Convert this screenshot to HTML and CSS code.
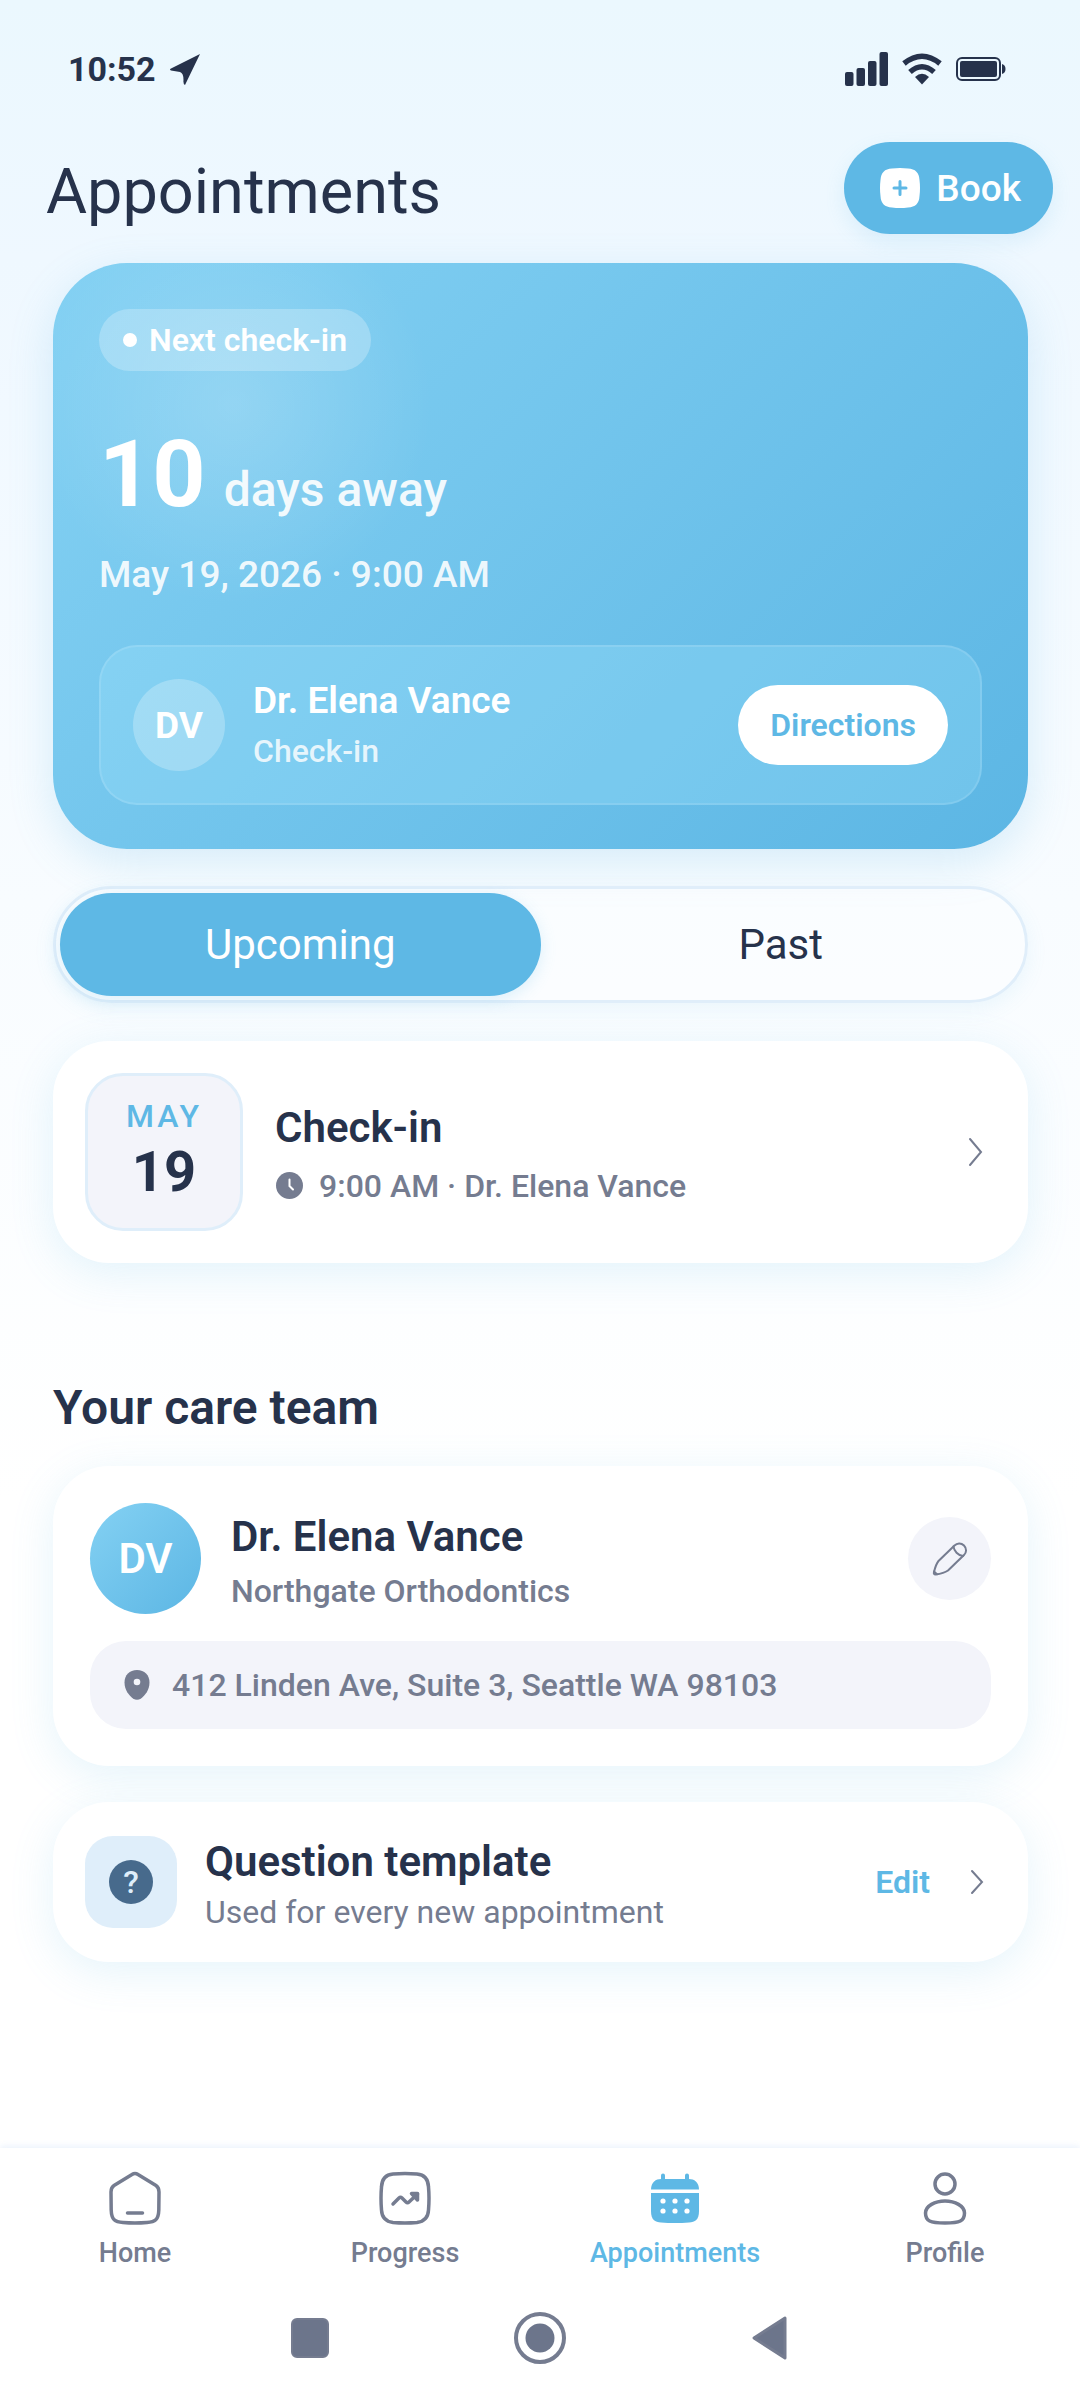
FILE: index.html
```html
<!DOCTYPE html>
<html lang="en">
  <head>
    <meta charset="UTF-8" />
    <meta name="viewport" content="width=device-width, initial-scale=1.0" />
    <title>Appointments</title>
    <link rel="stylesheet" href="styles.css">
  </head>
  <body>
    <div class="status-bar">
      <div class="status-left">
        <span>10:52</span>
        <svg width="30" height="31" viewBox="0 0 30 31"><path d="M30 0 L15 31 Q13 30 13.500 26 Q13.500 19 10 18 L1 16.500 Q-1 15.500 1 14.500 Z" fill="#26324b"/></svg>
      </div>
      <div class="status-right">
        <svg width="43" height="34" viewBox="0 0 43 34" fill="#26324b">
          <rect x="0" y="20" width="8.500" height="14" rx="2"/>
          <rect x="11.500" y="16" width="8.500" height="18" rx="2"/>
          <rect x="23" y="9" width="8.500" height="25" rx="2"/>
          <rect x="34.500" y="0" width="8.500" height="34" rx="2"/>
        </svg>
        <svg width="40" height="32" viewBox="0 0 40 32" fill="none" stroke="#26324b" stroke-width="5.500">
          <path d="M2 10.500 Q20 -4 38 10.500"/>
          <path d="M8 19 Q20 8.500 32 19"/>
          <path d="M13 24 Q20 17.500 27 24 L20 31.500 Z" fill="#26324b" stroke="none"/>
        </svg>
        <svg width="50" height="24" viewBox="0 0 50 24">
          <rect x="1" y="1" width="43" height="22" rx="5" fill="none" stroke="#26324b" stroke-width="2"/>
          <rect x="4" y="4" width="37" height="16" rx="2" fill="#26324b"/>
          <path d="M46 7 Q49.500 8 49.500 12 T46 17 Z" fill="#26324b"/>
        </svg>
      </div>
    </div>

    <header class="header">
      <h1>Appointments</h1>
      <button class="book">
        <svg width="40" height="40" viewBox="0 0 40 40">
          <path d="M12 0.500 Q20 -0.500 28 0.500 Q39 1 39.500 12 Q40.500 20 39.500 28 Q39 39 28 39.500 Q20 40.500 12 39.500 Q1 39 0.500 28 Q-0.500 20 0.500 12 Q1 1 12 0.500 Z" fill="#fff"/>
          <path d="M20 13.500 V26.500 M14 20 H26" stroke="#5eb8e5" stroke-width="3" stroke-linecap="round"/>
        </svg>
        Book
      </button>
    </header>

    <main class="content">
      <section class="hero">
        <div class="badge"><i class="dot"></i>Next check-in</div>
        <p class="countdown"><strong>10</strong><span>days away</span></p>
        <p class="date">May 19, 2026 · 9:00 AM</p>
        <div class="hero-doctor">
          <div class="avatar avatar-light">DV</div>
          <div class="info">
            <h2>Dr. Elena Vance</h2>
            <p>Check-in</p>
          </div>
          <button class="directions">Directions</button>
        </div>
      </section>

      <div class="tabs">
        <button class="tab active">Upcoming</button>
        <button class="tab">Past</button>
      </div>

      <article class="card visit">
        <div class="day">
          <span class="month">MAY</span>
          <span class="number">19</span>
        </div>
        <div class="info">
          <h3>Check-in</h3>
          <p class="time">
            <svg width="28" height="28" viewBox="0 0 28 28"><circle cx="14.500" cy="13.500" r="13.500" fill="#757c90"/><path d="M14.500 7.500 V14 L18 17.500" fill="none" stroke="#fff" stroke-width="2" stroke-linecap="round"/></svg>
            9:00 AM · Dr. Elena Vance
          </p>
        </div>
        <svg class="chevron" width="24" height="32" viewBox="0 0 24 32"><path d="M6 3 L17 16 L6 29"/></svg>
      </article>

      <h2 class="section-title">Your care team</h2>

      <article class="card team">
        <div class="team-head">
          <div class="avatar avatar-big">DV</div>
          <div class="info">
            <h3>Dr. Elena Vance</h3>
            <p>Northgate Orthodontics</p>
          </div>
          <button class="pencil" aria-label="Edit doctor">
            <svg width="36" height="36" viewBox="0 0 36 36" fill="none" stroke="#757c90" stroke-width="2" stroke-linecap="round" stroke-linejoin="round">
              <path d="M22.500 4.500 C25 2 29 1.500 32 4.500 C35 7.500 34.500 11.500 32 14 L16 29.500 C12.500 32 7 33 3.500 33.500 C2 33.500 1.500 32.500 2 31 C3 27 4 23 6.500 20 Z"/>
              <path d="M21.500 5.500 C22 10 26 14.500 31 15"/>
              <path d="M2 30.500 L5 33.300"/>
            </svg>
          </button>
        </div>
        <div class="address">
          <svg width="26" height="30" viewBox="0 0 26 30"><path d="M13 0 C5.500 0 0.500 5 0.500 12.500 C0.500 20 5 25.500 9 28.500 Q13 31 17 28.500 C21 25.500 25.500 20 25.500 12.500 C25.500 5 20.500 0 13 0 Z" fill="#757c90"/><circle cx="13" cy="12" r="3.300" fill="#f3f4fa"/></svg>
          412 Linden Ave, Suite 3, Seattle WA 98103
        </div>
      </article>

      <article class="card question">
        <div class="question-icon"><span>?</span></div>
        <div class="info">
          <h3>Question template</h3>
          <p class="light">Used for every new appointment</p>
        </div>
        <button class="edit">Edit</button>
        <svg class="chevron" width="24" height="26" viewBox="0 0 24 26"><path d="M8 2 L18 13 L8 24"/></svg>
      </article>
    </main>

    <div class="bottom">
      <nav class="bottom-nav">
        <a href="#">
          <svg width="54" height="54" viewBox="0 0 54 54" fill="none" stroke="#757c90" stroke-width="3.500" stroke-linecap="round">
            <path d="M24 3.500 Q27 1.500 30 3.500 L48 14.500 Q51 16.500 51 21 L50.800 39 C50.500 49 47 51 39 51.500 Q27 52.500 15 51.500 C7 51 3.500 49 3.200 39 L3 21 Q3 16.500 6 14.500 Z"/>
            <path d="M19.500 42 H34.500"/>
          </svg>
          Home
        </a>
        <a href="#">
          <svg width="54" height="54" viewBox="0 0 54 54" fill="none" stroke="#757c90" stroke-width="3.500" stroke-linecap="round" stroke-linejoin="round">
            <path d="M15 3 Q27 2 39 3 Q50 4 50.500 16 Q51.500 27 50.500 39 Q50 50 39 51.500 Q27 52.500 15 51.500 Q4 50 3.500 39 Q2.500 27 3.500 16 Q4 4 15 3 Z"/>
            <path d="M15 33 L21 27 Q22.500 25.500 24 27 L28 31 Q29.500 32.500 31 31 L39.500 23"/>
            <path d="M33.500 22.500 H39.500 V29 Z" fill="#757c90"/>
          </svg>
          Progress
        </a>
        <a href="#" class="current">
          <svg width="54" height="54" viewBox="0 0 54 54" fill="#5eb8e5">
            <path d="M15 4.500 V12 M39 4.500 V12" stroke="#5eb8e5" stroke-width="4" stroke-linecap="round"/>
            <path d="M3 18.500 C3 11 8 8 13 8 H41 C46 8 51 11 51 18.500 Z"/>
            <path d="M3 22 H51 V40 C51 49 47 51 41 51.500 Q27 52.500 13 51.500 C7 51 3 49 3 40 Z"/>
            <g fill="#fff">
              <circle cx="15" cy="30" r="2.600"/><circle cx="27" cy="30" r="2.600"/><circle cx="39" cy="30" r="2.600"/>
              <circle cx="15" cy="40" r="2.600"/><circle cx="27" cy="40" r="2.600"/><circle cx="39" cy="40" r="2.600"/>
            </g>
          </svg>
          Appointments
        </a>
        <a href="#">
          <svg width="54" height="54" viewBox="0 0 54 54" fill="none" stroke="#757c90" stroke-width="3.500">
            <circle cx="27" cy="13" r="10"/>
            <path d="M27 30 C37 30 46.500 35 46.500 42 C46.500 50 42 52 27 52 S7.500 50 7.500 42 C7.500 35 17 30 27 30 Z"/>
          </svg>
          Profile
        </a>
      </nav>
      <div class="system-nav">
        <svg width="38" height="40" viewBox="0 0 38 40"><rect x="1" y="1" width="36" height="38" rx="5" fill="#6c758b" stroke="#757c90" stroke-width="2"/></svg>
        <svg width="54" height="54" viewBox="0 0 54 54"><circle cx="27" cy="27" r="24" fill="none" stroke="#757c90" stroke-width="4"/><circle cx="27" cy="27" r="14.500" fill="#6c758b"/></svg>
        <svg width="38" height="46" viewBox="0 0 38 46"><path d="M34 3 V43 L3 23 Z" fill="#6c758b" stroke="#757c90" stroke-width="3" stroke-linejoin="round"/></svg>
      </div>
    </div>
  </body>
</html>
```

FILE: styles.css
```css
* {
  padding: 0;
  margin: 0;
  box-sizing: border-box;
  font-family: Roboto, "Liberation Sans", sans-serif;
}
body {
  min-height: 100vh;
  display: flex;
  flex-direction: column;
  color: #26324b;
  background: linear-gradient(#ebf8fe 0, #eff8ff 260px, #f8fcff 900px, #ffffff 1500px);
}
button {
  border: none;
  cursor: pointer;
}
svg {
  flex-shrink: 0;
}
.status-bar {
  height: 138px;
  padding: 0 74px 0 68px;
  display: flex;
  align-items: center;
  justify-content: space-between;
}
.status-left {
  display: flex;
  align-items: center;
  gap: 14px;
  font-size: 34px;
  font-weight: 700;
}
.status-right {
  display: flex;
  align-items: center;
  gap: 14px;
}
.header {
  padding: 4px 27px 0 46px;
  display: flex;
  align-items: flex-end;
  justify-content: space-between;
}
h1 {
  font-size: 63px;
  line-height: 84px;
  font-weight: 400;
}
.book {
  height: 92px;
  padding: 0 32px 0 36px;
  display: flex;
  align-items: center;
  gap: 16px;
  color: #fff;
  background-color: #5eb8e5;
  border-radius: 46px;
  font-size: 37px;
  font-weight: 500;
  box-shadow: 0 8px 20px rgba(94, 184, 229, 0.14);
}
.content {
  flex: 1;
  padding: 29px 52px 60px 53px;
}
.hero {
  padding: 46px 46px 44px;
  color: #fff;
  border-radius: 74px;
  background:
    radial-gradient(circle at 180px 142px, rgba(255, 255, 255, 0.18), rgba(255, 255, 255, 0) 200px),
    linear-gradient(135deg, #84d1f3, #5cb6e4);
  box-shadow: 0 14px 44px rgba(94, 184, 229, 0.22);
}
.badge {
  width: fit-content;
  padding: 0 24px;
  display: flex;
  align-items: center;
  gap: 12px;
  line-height: 62px;
  font-size: 32px;
  font-weight: 600;
  border-radius: 31px;
  background-color: rgba(255, 255, 255, 0.25);
}
.dot {
  width: 14px;
  height: 14px;
  border-radius: 50%;
  background-color: #fff;
}
.countdown {
  margin-top: 48px;
  display: flex;
  align-items: baseline;
  gap: 18px;
}
.countdown strong {
  font-size: 93px;
  line-height: 112px;
}
.countdown span {
  font-size: 48px;
  font-weight: 500;
  opacity: 0.9;
}
.date {
  margin: 22px 0 48px;
  font-size: 37px;
  line-height: 44px;
  font-weight: 500;
  color: rgba(255, 255, 255, 0.9);
}
.hero-doctor {
  padding: 32px;
  display: flex;
  align-items: center;
  gap: 28px;
  border: 2px solid rgba(255, 255, 255, 0.12);
  border-radius: 38px;
  background-color: rgba(168, 230, 255, 0.26);
}
.avatar {
  display: grid;
  place-items: center;
  flex-shrink: 0;
  border-radius: 50%;
  color: #fff;
}
.avatar-light {
  width: 92px;
  height: 92px;
  font-size: 37px;
  font-weight: 700;
  background-color: rgba(255, 255, 255, 0.25);
}
.avatar-big {
  width: 111px;
  height: 111px;
  font-size: 42px;
  font-weight: 600;
  background: linear-gradient(135deg, #84d1f3, #5cb6e4);
}
.info {
  flex: 1;
  display: flex;
  flex-direction: column;
  gap: 8px;
}
.info h2 {
  font-size: 37px;
  line-height: 44px;
  font-weight: 600;
}
.info h3 {
  font-size: 42px;
  line-height: 52px;
  font-weight: 600;
}
.info p {
  font-size: 32px;
  line-height: 40px;
  font-weight: 500;
}
.hero .info p {
  color: rgba(255, 255, 255, 0.82);
}
.directions {
  height: 80px;
  padding: 0 32px;
  border-radius: 40px;
  color: #5eb8e5;
  background-color: #fff;
  font-size: 32px;
  font-weight: 600;
}
.tabs {
  margin: 37px 0 38px;
  padding: 4px;
  display: flex;
  border: 3px solid #e0eefa;
  border-radius: 59px;
  background-color: rgba(255, 255, 255, 0.3);
  box-shadow: 0 6px 20px rgba(94, 184, 229, 0.1);
}
.tab {
  flex: 1;
  height: 103px;
  border-radius: 52px;
  font-size: 42px;
  font-weight: 400;
  color: #26324b;
  background: none;
}
.tab.active {
  color: #fff;
  background-color: #5eb8e5;
  box-shadow: 0 4px 16px rgba(94, 184, 229, 0.2);
}
.card {
  background-color: #fff;
  border-radius: 56px;
  box-shadow: 0 10px 44px rgba(94, 184, 229, 0.16);
}
.card .info {
  padding-top: 4px;
}
.card .info p {
  color: #757c90;
}
.card .info .light {
  font-weight: 400;
}
.visit {
  padding: 32px 40px 32px 32px;
  display: flex;
  align-items: center;
  gap: 32px;
}
.day {
  width: 158px;
  height: 158px;
  display: flex;
  flex-direction: column;
  align-items: center;
  justify-content: center;
  gap: 4px;
  padding-bottom: 4px;
  border: 3px solid #dfeefa;
  border-radius: 38px;
  background-color: #f3f4fa;
}
.month {
  font-size: 32px;
  line-height: 40px;
  font-weight: 500;
  letter-spacing: 3px;
  color: #5eb8e5;
}
.number {
  font-size: 56px;
  line-height: 64px;
  font-weight: 700;
}
.visit .info {
  gap: 12px;
}
.time {
  display: flex;
  align-items: center;
  gap: 16px;
}
.chevron path {
  fill: none;
  stroke: #757c90;
  stroke-width: 2;
  stroke-linecap: round;
}
.section-title {
  margin: 117px 0 30px;
  font-size: 48px;
  line-height: 56px;
  font-weight: 600;
}
.team {
  padding: 37px;
}
.team-head {
  display: flex;
  align-items: center;
  gap: 30px;
}
.pencil {
  width: 83px;
  height: 83px;
  display: grid;
  place-items: center;
  border-radius: 50%;
  background-color: #f3f4fa;
}
.address {
  margin-top: 27px;
  padding: 0 34px;
  display: flex;
  align-items: center;
  gap: 22px;
  line-height: 88px;
  font-size: 32px;
  font-weight: 500;
  color: #757c90;
  border-radius: 36px;
  background-color: #f3f4fa;
}
.question {
  margin-top: 36px;
  padding: 30px 40px 30px 32px;
  display: flex;
  align-items: center;
  gap: 28px;
}
.question .info {
  gap: 4px;
}
.question-icon {
  width: 92px;
  height: 92px;
  display: grid;
  place-items: center;
  border-radius: 28px;
  background-color: #dfeefa;
}
.question-icon span {
  width: 44px;
  height: 44px;
  border-radius: 50%;
  text-align: center;
  font-size: 32px;
  line-height: 44px;
  font-weight: 500;
  color: #dfeefa;
  background-color: #476a8c;
}
.edit {
  margin-right: 6px;
  font-size: 32px;
  font-weight: 600;
  color: #5eb8e5;
  background: none;
}
.bottom {
  background-color: #fff;
  box-shadow: 0 -2px 6px rgba(94, 150, 229, 0.12);
}
.bottom-nav {
  padding-top: 23px;
  display: flex;
}
.bottom-nav a {
  flex: 1;
  display: flex;
  flex-direction: column;
  align-items: center;
  gap: 12px;
  font-size: 27px;
  line-height: 32px;
  font-weight: 500;
  color: #757c90;
  text-decoration: none;
}
.bottom-nav .current {
  color: #5eb8e5;
}
.system-nav {
  padding: 42px 0 35px;
  display: flex;
  align-items: center;
  justify-content: center;
  gap: 184px;
}
```
